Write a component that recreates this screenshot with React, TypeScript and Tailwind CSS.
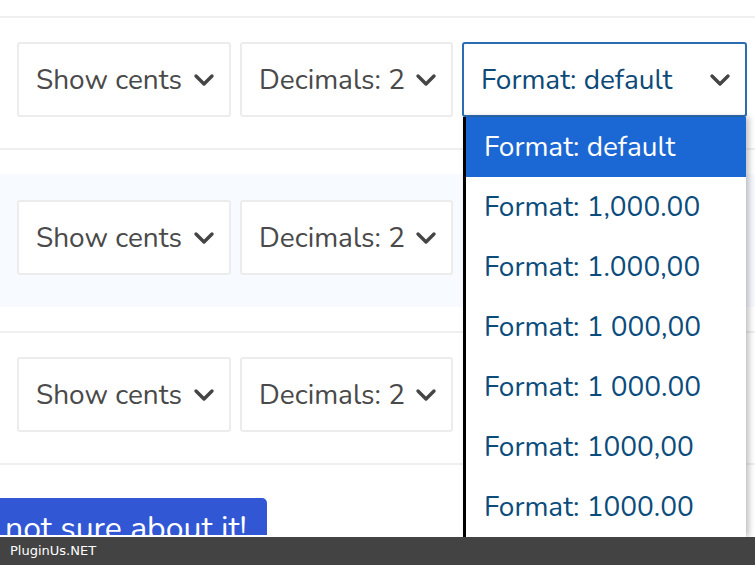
import React from "react";

const Chevron = () => (
  <svg width="22" height="14" viewBox="0 0 22 14" className="shrink-0">
    <path d="M3 3 L11 11 L19 3" fill="none" stroke="#454545" strokeWidth="3.4" strokeLinecap="round" strokeLinejoin="round" />
  </svg>
);

const Select = ({ label, w, active }: { label: string; w: string; active?: boolean }) => (
  <div
    className={`${w} h-[75px] flex items-center justify-between bg-white rounded-[3px] ${
      active ? "border-2 border-[#2a6db0] pl-[17px] pr-[14px] text-[#0d4a78]" : "border-2 border-[#ececec] pl-[17px] pr-[14px] text-[#4a4a4a]"
    }`}
  >
    <span className="text-[28px] leading-none whitespace-nowrap">{label}</span>
    <Chevron />
  </div>
);

const Row = ({ third = true }: { third?: boolean }) => (
  <div className="flex gap-[9px] pl-[17px]">
    <Select label="Show cents" w="w-[214px]" />
    <Select label="Decimals: 2" w="w-[213px]" />
    {third ? <Select label="Format: default" w="w-[285px]" active /> : <div className="w-[285px]" />}
  </div>
);

const options = [
  "Format: default",
  "Format: 1,000.00",
  "Format: 1.000,00",
  "Format: 1 000,00",
  "Format: 1 000.00",
  "Format: 1000,00",
  "Format: 1000.00",
];

export default function App() {
  return (
    <div
      className="relative w-[755px] h-[565px] overflow-hidden bg-white"
      style={{ fontFamily: '"Nunito", "Open Sans", "Noto Sans", sans-serif' }}
    >
      <div className="h-[16px]" />
      <div className="border-t-2 border-[#efefef] pt-[24px] pb-[31px]">
        <Row />
      </div>
      <div className="border-t-2 border-[#efefef] py-[24px]">
        <div className="bg-[#f7faff] pt-[26px] pb-[32px]">
          <Row third={false} />
        </div>
      </div>
      <div className="border-t-2 border-[#efefef] pt-[24px] pb-[31px]">
        <Row third={false} />
      </div>
      <div className="border-t-2 border-[#efefef] pt-[33px]">
        <div className="w-[267px] h-[37px] overflow-hidden bg-[#3157d5] rounded-tr-[5px] pl-[5px] pt-[15px] text-white text-[32px] leading-none whitespace-nowrap">
          not sure about it!
        </div>
      </div>

      {/* dropdown list */}
      <div className="absolute left-[463px] top-[117px] w-[283px] h-[420px] overflow-hidden bg-white border-l-[3px] border-black shadow-[3px_0_6px_rgba(0,0,0,0.25)]">
        {options.map((o, i) => (
          <div
            key={o}
            className={`h-[60px] flex items-center pl-[18px] text-[28px] whitespace-nowrap ${
              i === 0 ? "bg-[#1b67d3] text-white" : "text-[#0b4c7c]"
            }`}
          >
            {o}
          </div>
        ))}
      </div>

      {/* bottom bar */}
      <div
        className="absolute left-0 bottom-0 w-full h-[28px] bg-[#434343] text-white text-[13px] flex items-center pl-[10px]"
        style={{ fontFamily: '"DejaVu Sans", sans-serif' }}
      >
        PluginUs.NET
      </div>
    </div>
  );
}
